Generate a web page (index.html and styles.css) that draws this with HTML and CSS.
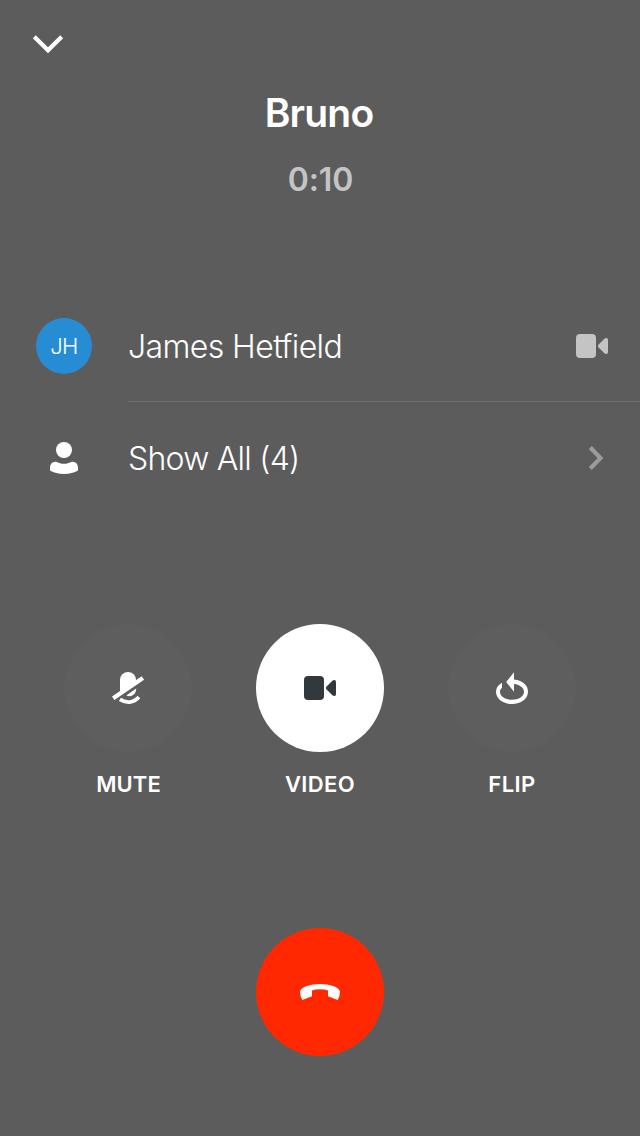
FILE: index.html
```html
<!DOCTYPE html>
<html lang="en">
<head>
<meta charset="utf-8">
<title>Call</title>
<link rel="stylesheet" href="styles.css">
</head>
<body>
<main class="call">
  <header class="top">
    <svg class="collapse" viewBox="0 0 32 20" width="32" height="20"><path d="M2.3 2.7 16 16.2 29.7 2.7" fill="none" stroke="#fff" stroke-width="4.2"/></svg>
  </header>
  <h1 class="title"><span>Bruno</span></h1>
  <div class="timer"><span>0:10</span></div>
  <section class="list">
    <div class="row">
      <div class="lead"><div class="avatar"><span>JH</span></div></div>
      <div class="cell divided">
        <span class="name">James Hetfield</span>
        <svg class="camera" viewBox="0 0 32 24" width="32" height="24"><rect width="20" height="24" rx="4"/><path d="M22.4 10.8 28.4 4.8Q29.6 3.8 30.8 4Q32 4.3 32 6V18Q32 19.7 30.8 20Q29.6 20.2 28.4 19.2L22.4 13.2Q21.4 12 22.4 10.8Z"/></svg>
      </div>
    </div>
    <div class="row">
      <div class="lead"><svg viewBox="0 0 28 32" width="28" height="32" fill="#fff"><circle cx="14" cy="8" r="8"/><path d="M5.3 19.7C7.5 19.7 9 21.7 14 21.7S20.5 19.7 22.7 19.7C26 19.7 28 22.5 28 26V28.6C24.5 31 19.5 32 14 32S3.5 31 0 28.6V26C0 22.5 2 19.7 5.3 19.7Z"/></svg></div>
      <div class="cell">
        <span class="name all">Show All (4)</span>
        <svg class="more" viewBox="0 0 16 24" width="16" height="24"><path d="M2.3 1.5 12.5 12 2.3 22.5" fill="none" stroke="#9b9b9b" stroke-width="4.1"/></svg>
      </div>
    </div>
  </section>
  <section class="controls">
    <div class="control">
      <div class="button"><svg viewBox="0 0 56 56" width="56" height="56" fill="#fff"><path d="M20 34V20a8 8 0 0 1 16 0v3Z"/><path d="M36.2 28.6 26.3 35.4C31.5 37.8 36.2 34.4 36.2 28.6Z"/><path d="M13.2 38.2 42.9 18" stroke="#fff" stroke-width="4.2"/><path d="M19.9 39.4C26 43.3 33.5 43.3 38.9 37.1" fill="none" stroke="#fff" stroke-width="3.8"/></svg></div>
      <span class="label mute">MUTE</span>
    </div>
    <div class="control">
      <div class="button active"><svg class="camera" viewBox="0 0 32 24" width="32" height="24"><rect width="20" height="24" rx="4"/><path d="M22.4 10.8 28.4 4.8Q29.6 3.8 30.8 4Q32 4.3 32 6V18Q32 19.7 30.8 20Q29.6 20.2 28.4 19.2L22.4 13.2Q21.4 12 22.4 10.8Z"/></svg></div>
      <span class="label video">VIDEO</span>
    </div>
    <div class="control">
      <div class="button"><svg viewBox="0 0 56 56" width="56" height="56" fill="#fff"><path d="M30 12.2V19.6C38.2 20.3 44 25.2 44 31.8C44 38.8 37 44 28 44S12 38.8 12 31.8C12 28 14.4 24.9 18 22.8V27.8C16.7 28.9 16 30.3 16 31.8C16 36.4 21.2 39.8 28 39.8S40 36.4 40 31.8C40 27.7 36 24.5 30 23.9V31.8L22.2 22Z"/></svg></div>
      <span class="label flip">FLIP</span>
    </div>
  </section>
  <footer class="bottom">
    <div class="hangup"><svg viewBox="0 0 40 16" width="40" height="16" fill="#fff"><path d="M2.3 16Q0 12 0 7.5C1.5 2.8 10 0 20 0S38.5 2.8 40 7.5Q40 12 37.7 16L28 12.3V6.5Q24.5 5.3 20 5.3T12 6.5V12.3Z"/></svg></div>
  </footer>
</main>
</body>
</html>
```
FILE: styles.css
```css
* { box-sizing: border-box; }
body { margin: 0; background: #5c5c5c; }
svg { display: block; }
.call {
  width: 640px;
  height: 1136px;
  display: flex;
  flex-direction: column;
  color: #fff;
  background: #5c5c5c;
  font-family: Inter, "Liberation Sans", sans-serif;
  overflow: hidden;
}
.top { height: 88px; padding: 34px 32px 0; }
.title {
  margin: 0;
  height: 48px;
  line-height: 50px;
  padding-right: 2px;
  text-align: center;
  font-size: 39px;
  font-weight: 600;
  letter-spacing: -0.8px;
}
.timer {
  height: 154px;
  padding: 24px 0 0 1px;
  line-height: 40px;
  text-align: center;
  font-size: 32px;
  font-weight: 600;
  letter-spacing: -0.1px;
  color: #c4c4c4;
}
.list { height: 334px; }
.row { display: flex; height: 112px; }
.lead {
  width: 128px;
  display: flex;
  align-items: center;
  justify-content: center;
}
.avatar {
  width: 56px;
  height: 56px;
  border-radius: 50%;
  background: #268dd5;
  line-height: 57px;
  text-align: center;
  font-size: 22px;
  font-weight: 300;
  letter-spacing: -0.6px;
}
.cell {
  flex: 1;
  display: flex;
  align-items: center;
  justify-content: space-between;
  padding-right: 32px;
}
.divided { border-bottom: 1px solid #707070; height: 112px; }
.name {
  padding-top: 2px;
  font-size: 32px;
  font-weight: 300;
  line-height: 40px;
  letter-spacing: -0.6px;
}
.all { letter-spacing: -0.75px; }
.camera { fill: #c4c4c4; }
.more { margin-right: 4px; }
.controls {
  display: flex;
  padding: 0 64px;
  justify-content: space-between;
  height: 304px;
}
.control {
  width: 128px;
  display: flex;
  flex-direction: column;
  align-items: center;
}
.button {
  width: 128px;
  height: 128px;
  border-radius: 50%;
  display: flex;
  align-items: center;
  justify-content: center;
  background: #5e5e5e;
}
.active { background: #fff; }
.active .camera { fill: #33383c; }
.label {
  margin-top: 18px;
  line-height: 28px;
  font-size: 22px;
  font-weight: 600;
  letter-spacing: 0.4px;
}
.mute { letter-spacing: 0.1px; padding-left: 1px; }
.bottom { display: flex; justify-content: center; }
.hangup {
  width: 128px;
  height: 128px;
  border-radius: 50%;
  background: #ff2800;
  display: flex;
  align-items: center;
  justify-content: center;
}
```
